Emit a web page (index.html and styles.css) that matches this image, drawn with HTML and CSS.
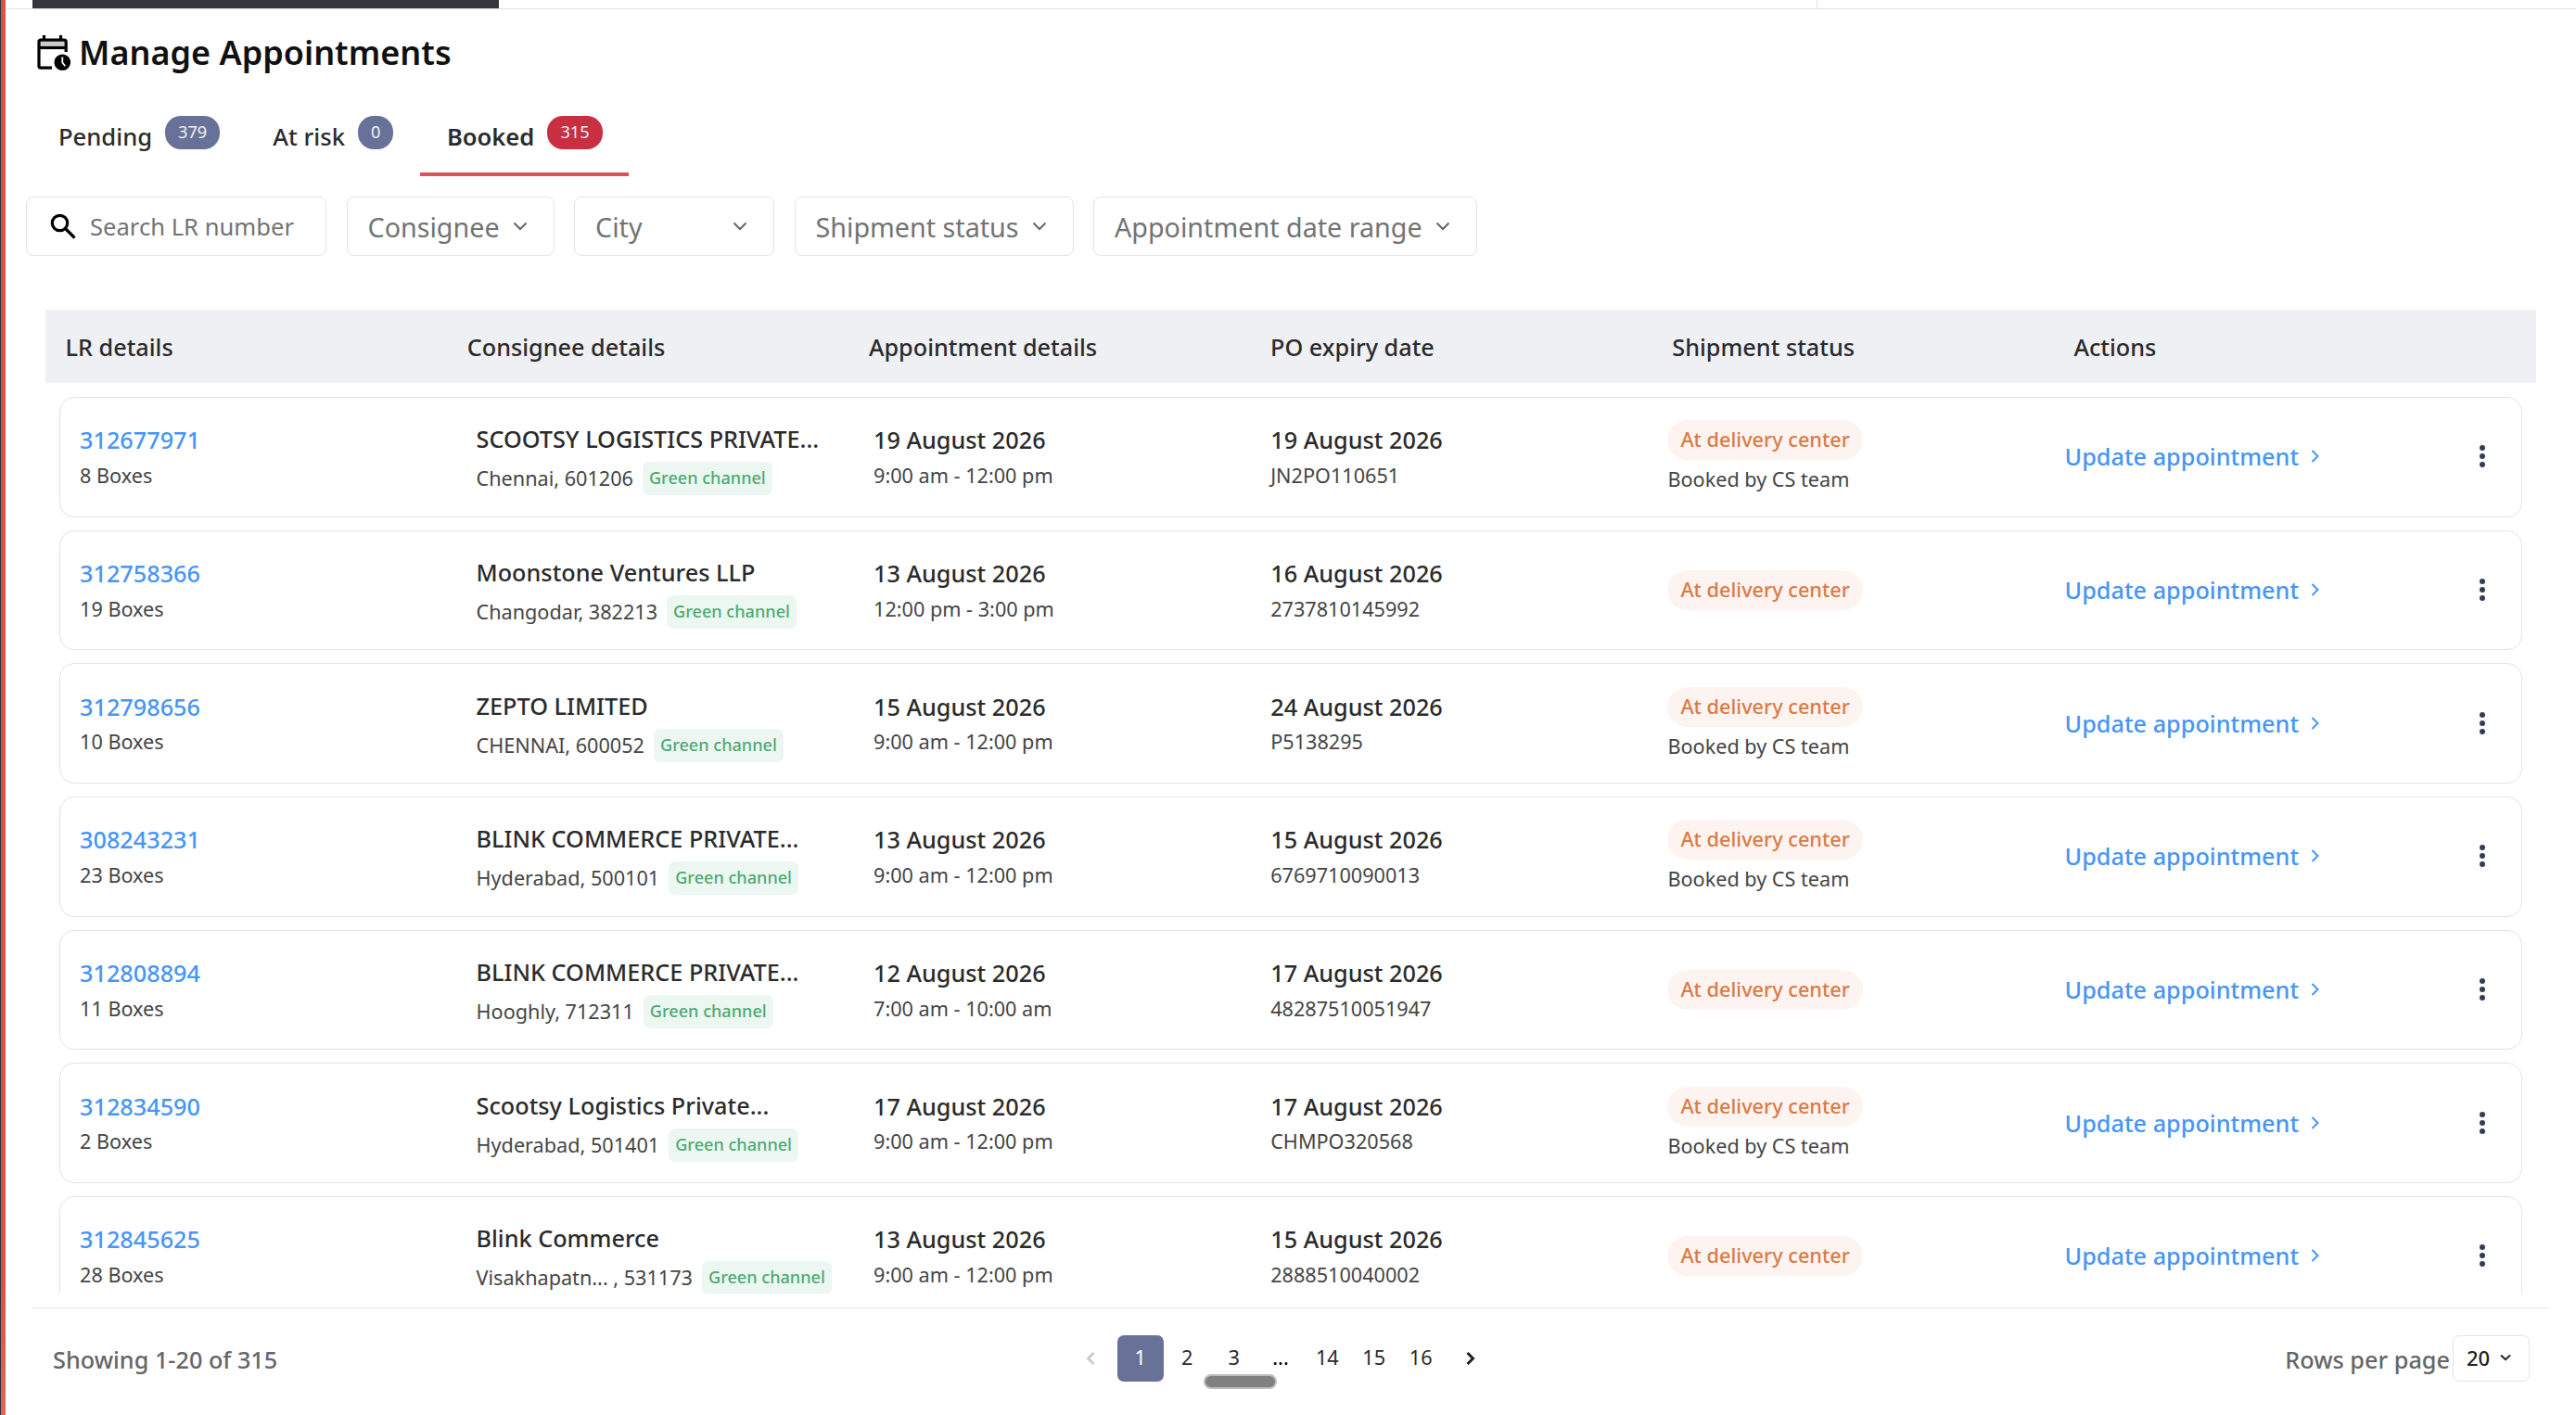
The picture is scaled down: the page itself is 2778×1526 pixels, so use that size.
FILE: index.html
```
<!DOCTYPE html>
<html lang="en">
<head>
  <meta charset="UTF-8">
  <meta name="viewport" content="width=device-width, initial-scale=1.0">
  <title>Manage Appointments</title>
  <link rel="stylesheet" href="styles.css">
</head>
<body>
  <div class="side-strip"></div>
  <main class="page">
    <div class="top-bar">
      <div class="top-tab"></div>
      <div class="top-divider"></div>
    </div>

    <header class="title-row">
      <svg class="title-icon" viewBox="0 0 36 38" width="36" height="38" fill="none">
        <path d="M7.500 0v5M25.500 0v5" stroke="#000" stroke-width="3.200"/>
        <path d="M3 9.500h28" stroke="#ccc" stroke-width="5"/>
        <path d="M31.200 18V7.200a2 2 0 0 0-2-2H4a2 2 0 0 0-2 2v26a2 2 0 0 0 2 2h12" stroke="#000" stroke-width="3.200"/>
        <path d="M2 13.500h29" stroke="#000" stroke-width="3.200"/>
        <circle cx="27.300" cy="29.200" r="8.800" fill="#000"/>
        <path d="M27.300 23.500v6l3 3.800" stroke="#fff" stroke-width="1.800"/>
      </svg>
      <h1>Manage Appointments</h1>
    </header>

    <nav class="tabs">
      <a class="tab">Pending <span class="badge">379</span></a>
      <a class="tab">At risk <span class="badge">0</span></a>
      <a class="tab active">Booked <span class="badge">315</span></a>
    </nav>

    <div class="filters">
      <label class="filter search">
        <svg viewBox="0 0 28 28" width="28" height="28" fill="none" stroke="#000" stroke-width="3.200">
          <circle cx="10.500" cy="10.500" r="8.200"/>
          <path d="M16.500 16.500L26.500 26.500"/>
        </svg>
        <span>Search LR number</span>
      </label>
      <div class="filter consignee">Consignee <svg class="caret" viewBox="0 0 16 10"><path d="M1.500 1.500L8 8L14.500 1.500"/></svg></div>
      <div class="filter city">City <svg class="caret" viewBox="0 0 16 10"><path d="M1.500 1.500L8 8L14.500 1.500"/></svg></div>
      <div class="filter status-filter">Shipment status <svg class="caret" viewBox="0 0 16 10"><path d="M1.500 1.500L8 8L14.500 1.500"/></svg></div>
      <div class="filter date-filter">Appointment date range <svg class="caret" viewBox="0 0 16 10"><path d="M1.500 1.500L8 8L14.500 1.500"/></svg></div>
    </div>

    <section class="table">
      <div class="table-head">
        <span>LR details</span>
        <span>Consignee details</span>
        <span>Appointment details</span>
        <span>PO expiry date</span>
        <span>Shipment status</span>
        <span>Actions</span>
      </div>
      <div class="rows" id="rows"></div>
    </section>

    <footer class="footer">
      <span class="showing">Showing 1-20 of 315</span>
      <div class="pagination">
        <svg class="arrow prev" viewBox="0 0 10 14"><path d="M8.500 1L2.500 7L8.500 13"/></svg>
        <span class="page-no current">1</span>
        <span class="page-no">2</span>
        <span class="page-no">3</span>
        <span class="page-no dots">...</span>
        <span class="page-no">14</span>
        <span class="page-no">15</span>
        <span class="page-no">16</span>
        <svg class="arrow next" viewBox="0 0 10 14"><path d="M1.500 1L7.500 7L1.500 13"/></svg>
        <div class="scroll-thumb"></div>
      </div>
      <div class="per-page">
        <span>Rows per page</span>
        <div class="per-page-select">20 <svg viewBox="0 0 12 8"><path d="M1 1.500L6 6.200L11 1.500"/></svg></div>
      </div>
    </footer>
  </main>

  <script>
    const appointments = [
      { lr: '312677971', boxes: 8, name: 'SCOOTSY LOGISTICS PRIVATE...', place: 'Chennai, 601206', date: '19 August 2026', slot: '9:00 am - 12:00 pm', expiry: '19 August 2026', po: 'JN2PO110651', cs: true },
      { lr: '312758366', boxes: 19, name: 'Moonstone Ventures LLP', place: 'Changodar, 382213', date: '13 August 2026', slot: '12:00 pm - 3:00 pm', expiry: '16 August 2026', po: '2737810145992', cs: false },
      { lr: '312798656', boxes: 10, name: 'ZEPTO LIMITED', place: 'CHENNAI, 600052', date: '15 August 2026', slot: '9:00 am - 12:00 pm', expiry: '24 August 2026', po: 'P5138295', cs: true },
      { lr: '308243231', boxes: 23, name: 'BLINK COMMERCE PRIVATE...', place: 'Hyderabad, 500101', date: '13 August 2026', slot: '9:00 am - 12:00 pm', expiry: '15 August 2026', po: '6769710090013', cs: true },
      { lr: '312808894', boxes: 11, name: 'BLINK COMMERCE PRIVATE...', place: 'Hooghly, 712311', date: '12 August 2026', slot: '7:00 am - 10:00 am', expiry: '17 August 2026', po: '48287510051947', cs: false },
      { lr: '312834590', boxes: 2, name: 'Scootsy Logistics Private...', place: 'Hyderabad, 501401', date: '17 August 2026', slot: '9:00 am - 12:00 pm', expiry: '17 August 2026', po: 'CHMPO320568', cs: true },
      { lr: '312845625', boxes: 28, name: 'Blink Commerce', place: 'Visakhapatn... , 531173', date: '13 August 2026', slot: '9:00 am - 12:00 pm', expiry: '15 August 2026', po: '2888510040002', cs: false }
    ];

    document.getElementById('rows').innerHTML = appointments.map(a => `
      <div class="card">
        <div class="cell">
          <a class="lr">${a.lr}</a>
          <span class="sub">${a.boxes} Boxes</span>
        </div>
        <div class="cell consignee-cell">
          <span class="main">${a.name}</span>
          <div class="place"><span class="sub">${a.place}</span><span class="tag">Green channel</span></div>
        </div>
        <div class="cell">
          <span class="main">${a.date}</span>
          <span class="sub">${a.slot}</span>
        </div>
        <div class="cell">
          <span class="main">${a.expiry}</span>
          <span class="sub">${a.po}</span>
        </div>
        <div class="status">
          <span class="pill">At delivery center</span>
          ${a.cs ? '<span class="booked-by">Booked by CS team</span>' : ''}
        </div>
        <div class="actions">
          <a class="update">Update appointment
            <svg viewBox="0 0 10 14"><path d="M1.500 1L7.500 7L1.500 13"/></svg>
          </a>
          <svg class="menu" viewBox="0 0 8 26"><circle cx="4" cy="4" r="3"/><circle cx="4" cy="13" r="3"/><circle cx="4" cy="22" r="3"/></svg>
        </div>
      </div>`).join('');
  </script>
</body>
</html>
```
FILE: styles.css
```
* {
  margin: 0;
  padding: 0;
  box-sizing: border-box;
}

body {
  display: flex;
  width: 2778px;
  height: 1526px;
  overflow: hidden;
  background: #fff;
  color: #2b2b2b;
  font-family: "Noto Sans", sans-serif;
  font-size: 25.250px;
  font-weight: 500;
}

svg {
  display: block;
  flex: none;
}

.side-strip {
  width: 6px;
  border-left: 1px solid #2b2f42;
  background: linear-gradient(#e05144 91%, #e2655a);
}

.page {
  flex: 1;
  display: flex;
  flex-direction: column;
}

.top-bar {
  display: flex;
  height: 10px;
  border-bottom: 1px solid #dfe1e6;
}

.top-tab {
  width: 503px;
  margin-left: 29px;
  background: #36373b;
}

.top-divider {
  width: 1px;
  margin-left: 1421px;
  background: #dfe1e6;
}

.title-row {
  display: flex;
  align-items: center;
  gap: 9px;
  margin-top: 22px;
  padding-left: 34px;
}

h1 {
  color: #111;
  font-size: 36px;
  font-weight: 600;
  line-height: 50px;
}

/* tabs */
.tabs {
  display: flex;
  height: 65px;
  margin-top: 43px;
  padding-left: 28px;
}

.tab {
  display: flex;
  align-items: flex-start;
  gap: 14px;
  padding: 0 28px 0 29px;
  border-bottom: 4px solid transparent;
  font-size: 25.600px;
  line-height: 45px;
}

.tab.active {
  padding-left: 28.500px;
  margin-left: 1px;
  border-color: #e14f5c;
  font-weight: 600;
}

.badge {
  height: 36px;
  padding: 0 14px;
  border-radius: 17px;
  background: #687299;
  color: #f0f1f5;
  font-size: 18.200px;
  font-weight: 400;
  line-height: 35px;
}

.active .badge {
  background: #c83042;
}

/* filters */
.filters {
  display: flex;
  gap: 21.500px;
  margin-top: 22px;
  padding-left: 22px;
}

.filter {
  display: flex;
  align-items: center;
  justify-content: space-between;
  height: 64px;
  padding: 0 28px 0 22px;
  border: 1px solid #e3e3e3;
  border-radius: 8px;
  color: #737373;
  font-size: 28.700px;
  font-weight: 400;
  white-space: nowrap;
}

.search {
  justify-content: flex-start;
  gap: 15px;
  width: 324px;
  padding-left: 25px;
  font-size: 25.600px;
}

.consignee {
  width: 224px;
}

.city {
  width: 216px;
}

.status-filter {
  width: 301px;
}

.date-filter {
  width: 414px;
}

.caret {
  width: 16px;
  height: 10px;
  fill: none;
  stroke: #666;
  stroke-width: 2;
}

/* table */
.table {
  width: 2686px;
  height: 1061px;
  margin: 58px 0 0 43px;
  overflow: hidden;
}

.table-head {
  display: grid;
  grid-template-columns: repeat(5, 433.200px) 1fr;
  align-items: center;
  height: 79px;
  padding: 1px 0 0 21.500px;
  background: #eff0f4;
}

.rows {
  display: flex;
  flex-direction: column;
  gap: 14px;
  padding: 15px 15px 0;
}

.card {
  display: grid;
  grid-template-columns: 427.500px 428.500px repeat(3, 428.200px) 1fr;
  align-items: center;
  height: 129.700px;
  padding-left: 21px;
  border: 1px solid #e3e3e3;
  border-radius: 16px;
}

.cell {
  display: flex;
  flex-direction: column;
  gap: 4.500px;
  padding-top: 1.500px;
  line-height: 34px;
  white-space: nowrap;
}

.lr,
.update {
  color: #4795f7;
}

.sub,
.booked-by {
  color: #454545;
  font-size: 21.650px;
  font-weight: 400;
}

.consignee-cell {
  gap: 8px;
  padding-top: 5px;
}

.place {
  display: flex;
  align-items: center;
  gap: 10px;
}

.tag {
  height: 36px;
  padding: 0 7px;
  border-radius: 7px;
  background: #ecf7f2;
  color: #4caa72;
  font-size: 18.100px;
}

.status {
  display: flex;
  flex-direction: column;
  align-items: flex-start;
  gap: 6px;
}

.pill {
  height: 43px;
  padding: 0 14px;
  border-radius: 22px;
  background: #fdf4f1;
  color: #da7a45;
  font-size: 21.700px;
  line-height: 42px;
}

.booked-by {
  line-height: 30px;
}

.actions {
  display: flex;
  align-items: center;
  justify-content: space-between;
  padding: 0 38px 1px 0;
}

.update {
  display: flex;
  align-items: center;
  gap: 12.500px;
}

.update svg {
  width: 10px;
  height: 14px;
  fill: none;
  stroke: #4795f7;
  stroke-width: 2;
}

.menu {
  width: 8px;
  height: 26px;
  fill: #353b52;
}

/* footer */
.footer {
  display: grid;
  grid-template-columns: 1fr auto 1fr;
  align-items: center;
  width: 2714px;
  height: 110px;
  margin: 15px 0 0 29px;
  padding: 0 21px;
  border-top: 1px solid #e3e3e3;
  color: #666;
}

.showing {
  padding-left: 1px;
}

.pagination {
  position: relative;
  display: flex;
  align-items: center;
  margin: 0 0 2px -22px;
  color: #2b2b2b;
  font-size: 21.700px;
  font-weight: 400;
}

.page-no {
  width: 50.400px;
  height: 50px;
  border-radius: 7px;
  line-height: 48px;
  text-align: center;
}

.page-no.current {
  background: #687299;
  color: #fff;
}

.page-no.dots {
  color: #000;
}

.arrow {
  width: 10px;
  height: 14px;
  fill: none;
  stroke: #222;
  stroke-width: 3;
}

.prev {
  margin-right: 24px;
  stroke: #ccc;
}

.next {
  margin-left: 24px;
}

.scroll-thumb {
  position: absolute;
  left: 127px;
  top: 42px;
  width: 79px;
  height: 16px;
  border: 2px solid #bdbdbd;
  border-radius: 8px;
  background: #808080;
}

.per-page {
  display: flex;
  align-items: center;
  justify-content: flex-end;
  gap: 3px;
}

.per-page-select {
  display: flex;
  align-items: center;
  gap: 11px;
  width: 83px;
  height: 50px;
  margin-bottom: 2px;
  padding: 0 0 2px 14px;
  border: 1px solid #e3e3e3;
  border-radius: 7px;
  color: #222;
  font-size: 22px;
}

.per-page-select svg {
  width: 12px;
  height: 8px;
  fill: none;
  stroke: #222;
  stroke-width: 2;
}
```
